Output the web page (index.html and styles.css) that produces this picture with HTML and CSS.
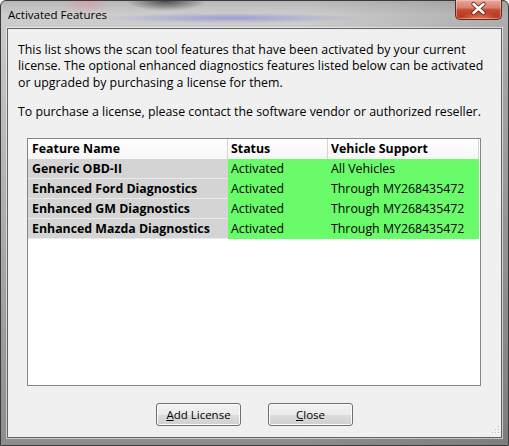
FILE: index.html
```html
<!DOCTYPE html>
<html>
<head>
<meta charset="utf-8">
<link rel="stylesheet" href="styles.css">
</head>
<body>
<div class="window">
  <div class="titlebar">
    <span class="title">Activated Features</span>
    <div class="close-btn">
      <svg width="47" height="20" viewBox="0 0 47 20">
        <path d="M18.5 5 L28.5 14 M28.5 5 L18.5 14" stroke="#5a1a10" stroke-width="4.2" stroke-linecap="round"/>
        <path d="M18.5 5 L28.5 14 M28.5 5 L18.5 14" stroke="#ffffff" stroke-width="2.6" stroke-linecap="round"/>
      </svg>
    </div>
  </div>
  <div class="client">
    <p class="intro">This list shows the scan tool features that have been activated by your current<br>license. The optional enhanced diagnostics features listed below can be activated<br>or upgraded by purchasing a license for them.</p>
    <p class="intro">To purchase a license, please contact the software vendor or authorized reseller.</p>
    <div class="listbox">
      <div class="row header">
        <div class="cell c1">Feature Name</div>
        <div class="cell c2">Status</div>
        <div class="cell c3">Vehicle Support</div>
      </div>
      <div class="row">
        <div class="cell c1">Generic OBD-II</div>
        <div class="cell c2">Activated</div>
        <div class="cell c3">All Vehicles</div>
      </div>
      <div class="row">
        <div class="cell c1">Enhanced Ford Diagnostics</div>
        <div class="cell c2">Activated</div>
        <div class="cell c3">Through MY268435472</div>
      </div>
      <div class="row">
        <div class="cell c1">Enhanced GM Diagnostics</div>
        <div class="cell c2">Activated</div>
        <div class="cell c3">Through MY268435472</div>
      </div>
      <div class="row">
        <div class="cell c1">Enhanced Mazda Diagnostics</div>
        <div class="cell c2">Activated</div>
        <div class="cell c3">Through MY268435472</div>
      </div>
    </div>
    <div class="buttons">
      <button class="btn"><u>A</u>dd License</button>
      <button class="btn"><u>C</u>lose</button>
    </div>
    <div class="grip">
      <svg width="10" height="10" viewBox="0 0 10 10">
        <g fill="#b8b8b8">
          <rect x="8" y="0" width="1" height="1"/>
          <rect x="8" y="3" width="1" height="1"/><rect x="5" y="3" width="1" height="1"/>
          <rect x="8" y="6" width="1" height="1"/><rect x="5" y="6" width="1" height="1"/><rect x="2" y="6" width="1" height="1"/>
        </g>
        <g fill="#ffffff">
          <rect x="9" y="1" width="1" height="1"/>
          <rect x="9" y="4" width="1" height="1"/><rect x="6" y="4" width="1" height="1"/>
          <rect x="9" y="7" width="1" height="1"/><rect x="6" y="7" width="1" height="1"/><rect x="3" y="7" width="1" height="1"/>
        </g>
      </svg>
    </div>
  </div>
</div>
</body>
</html>
```

FILE: styles.css
```css
html, body {
  margin: 0;
  padding: 0;
  background: #ffffff;
}

body {
  font-family: "Open Sans", "Noto Sans", sans-serif;
  font-size: 12.35px;
  color: #000;
}

.window {
  width: 509px;
  height: 446px;
  box-sizing: border-box;
  border: 1px solid #3a3a3a;
  border-radius: 6px 6px 0 0;
  display: flex;
  flex-direction: column;
  padding: 0 6px 7px 6px;
  background:
    radial-gradient(ellipse 40px 10px at 165px 0px, rgba(40,40,40,0.75), rgba(40,40,40,0) 100%),
    radial-gradient(ellipse 25px 10px at 85px 2px, rgba(220,150,160,0.6), rgba(220,150,160,0) 100%),
    radial-gradient(ellipse 130px 5px at 230px 17px, rgba(110,120,220,0.55), rgba(110,120,220,0) 100%),
    linear-gradient(to right, rgba(0,0,0,0) 60%, rgba(80,80,80,0.25) 100%),
    linear-gradient(to bottom, #b8b8b8 0px, #cdcdcd 14px, #c4c4c4 60px, #a8a8a8 250px, #8c8c8c 446px);
}

.titlebar {
  height: 27px;
  display: flex;
  justify-content: space-between;
  align-items: flex-start;
  margin: 0 0 0 1px;
}

.title {
  font-size: 11.5px;
  line-height: 27px;
  color: #000;
}

.close-btn {
  width: 47px;
  height: 20px;
  margin-top: -1px;
  box-sizing: border-box;
  border: 1px solid #5c2a22;
  border-top: none;
  border-radius: 0 0 5px 5px;
  background:
    radial-gradient(ellipse 20px 8px at 23px 20px, rgba(255,170,120,0.7), rgba(255,170,120,0) 100%),
    linear-gradient(to bottom, #e7a99c 0%, #d9806e 40%, #c34a32 52%, #b9321c 100%);
  box-shadow: inset 0 0 0 1px rgba(255,220,210,0.45);
}

.close-btn svg {
  display: block;
  margin: -1px 0 0 -1px;
}

.client {
  position: relative;
  flex: 1;
  background: #f0f0f0;
  border: 1px solid #626262;
  box-shadow: 0 0 0 1px rgba(255,255,255,0.55);
  display: flex;
  flex-direction: column;
  padding: 12.5px 0 0 10px;
}

.intro {
  margin: 0 0 12.5px 0;
  line-height: 16.5px;
  white-space: nowrap;
}

.listbox {
  margin: 5px 0 0 9px;
  width: 454px;
  height: 248px;
  box-sizing: border-box;
  border: 1px solid #828790;
  background: #ffffff;
}

.row {
  display: flex;
  height: 20px;
}

.cell {
  box-sizing: border-box;
  height: 20px;
  line-height: 20px;
  white-space: nowrap;
  overflow: hidden;
}

.c1 {
  width: 200px;
  padding-left: 4px;
  font-weight: bold;
  background: #d4d4d4;
  border-bottom: 1px solid #e9e9e9;
}

.c2 {
  width: 100px;
  padding-left: 3px;
  background: #69fb69;
}

.c3 {
  width: 151px;
  padding-left: 3px;
  background: #69fb69;
}

.header .cell {
  font-weight: bold;
  background: linear-gradient(to bottom, #ffffff 0%, #f6f6f6 100%);
  border-bottom: none;
  border-right: 1px solid #d5d5d5;
}

.buttons {
  display: flex;
  justify-content: center;
  gap: 27px;
  margin-top: 17px;
  padding-right: 10px;
}

.btn {
  width: 85px;
  height: 23px;
  box-sizing: border-box;
  border: 1px solid #707070;
  border-radius: 3px;
  font-family: "Open Sans", "Noto Sans", sans-serif;
  font-size: 11.5px;
  color: #000;
  padding: 0;
  background: linear-gradient(to bottom, #f2f2f2 0%, #ebebeb 50%, #dddddd 51%, #cfcfcf 100%);
  box-shadow: inset 0 0 0 1px #fbfbfb;
}

.grip {
  position: absolute;
  right: 1px;
  bottom: 1px;
  width: 10px;
  height: 10px;
}

.grip svg {
  display: block;
}
```
